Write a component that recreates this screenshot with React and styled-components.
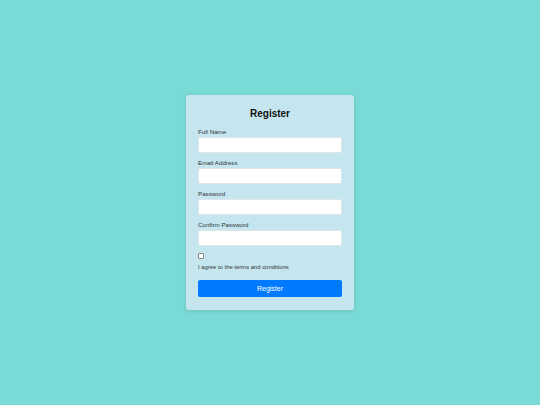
import React from "react"
import styled, { createGlobalStyle } from "styled-components"

const GlobalStyle = createGlobalStyle`
  html, body {
    margin: 0;
    padding: 0;
    height: 100%;
  }
  body {
    background: #7adad6;
    font-family: "Liberation Sans", Arial, sans-serif;
  }
  #root {
    height: 100%;
  }
`

const Page = styled.div`
  display: flex;
  align-items: center;
  justify-content: center;
  height: 405px;
`

const Card = styled.form`
  box-sizing: border-box;
  display: flex;
  flex-direction: column;
  width: 168px;
  height: 215px;
  padding: 12px 12px 13px;
  background: #c5e6ef;
  border-radius: 3px;
  box-shadow: 0 1px 4px rgba(0, 0, 0, 0.12);
`

const Title = styled.h2`
  height: 13px;
  margin: 0 0 8px;
  font-size: 10px;
  line-height: 14px;
  font-weight: 700;
  text-align: center;
  color: #111;
`

const Group = styled.div`
  display: flex;
  flex-direction: column;
  height: 26px;
  margin-bottom: 5px;
`

const Label = styled.label`
  display: block;
  height: 7px;
  font-size: 6.2px;
  line-height: 7px;
  color: #2e3436;
  margin-bottom: 2px;
  white-space: nowrap;
`

const Input = styled.input`
  box-sizing: border-box;
  display: block;
  width: 100%;
  height: 16px;
  flex: none;
  margin: 0;
  padding: 0 4px;
  border: 0.5px solid #dde7ea;
  border-radius: 2px;
  background: #fff;
  font-size: 6px;
  outline: none;
`

const Check = styled.input`
  appearance: none;
  box-sizing: border-box;
  display: block;
  flex: none;
  width: 6px;
  height: 6px;
  margin: 1px 0 2px;
  border: 0.75px solid #858585;
  border-radius: 1px;
  background: #fff;
`

const Terms = styled.div`
  height: 7px;
  margin-top: 2.5px;
  font-size: 5.9px;
  line-height: 7px;
  color: #2e3436;
  white-space: nowrap;
`

const Button = styled.button`
  display: block;
  flex: none;
  width: 100%;
  height: 17px;
  margin-top: 9.5px;
  padding: 0;
  border: none;
  border-radius: 2px;
  background: #007bff;
  color: #fff;
  font-family: "Liberation Sans", Arial, sans-serif;
  font-size: 7px;
`

const fields = [
  { label: "Full Name", type: "text" },
  { label: "Email Address", type: "email" },
  { label: "Password", type: "password" },
  { label: "Confirm Password", type: "password" },
]

export default function App() {
  return (
    <Page>
      <GlobalStyle />
      <Card onSubmit={e => e.preventDefault()}>
        <Title>Register</Title>
        {fields.map(f => (
          <Group key={f.label}>
            <Label>{f.label}</Label>
            <Input type={f.type} />
          </Group>
        ))}
        <Check type="checkbox" />
        <Terms>I agree to the terms and conditions</Terms>
        <Button type="submit">Register</Button>
      </Card>
    </Page>
  )
}
